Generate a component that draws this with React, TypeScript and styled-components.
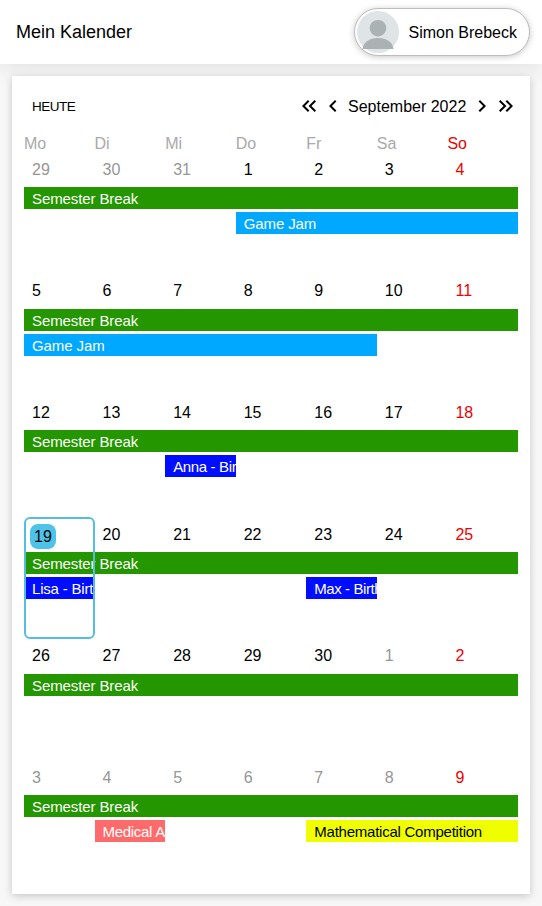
import React from "react";
import styled, { createGlobalStyle } from "styled-components";
import {
  MdChevronLeft,
  MdChevronRight,
  MdKeyboardDoubleArrowLeft,
  MdKeyboardDoubleArrowRight,
} from "react-icons/md";

const GlobalStyle = createGlobalStyle`
  *, *::before, *::after { box-sizing: border-box; }
  body {
    margin: 0;
    background: #f7f7f7;
    color: #000;
    font-family: "Liberation Sans", Arial, sans-serif;
    font-size: 16px;
  }
`;

const Page = styled.div`
  display: flex;
  flex-direction: column;
  height: 100vh;
  overflow: hidden;
`;

const Header = styled.header`
  display: flex;
  align-items: center;
  justify-content: space-between;
  flex: none;
  height: 64px;
  padding: 0 12px 0 16px;
  background: #fff;
  box-shadow: 0 0 24px rgba(0, 0, 0, 0.12);
`;

const Title = styled.h1`
  margin: 0;
  font-size: 18px;
  font-weight: 400;
`;

const UserChip = styled.button`
  display: flex;
  align-items: center;
  gap: 9.5px;
  width: 176px;
  height: 48px;
  padding: 0 0 0 2px;
  border: 1px solid #bdbdbd;
  border-radius: 24px;
  background: #fff;
  box-shadow: 0 1px 6px rgba(0, 0, 0, 0.22);
  color: #000;
  font: inherit;
  white-space: nowrap;
`;

const UserName = styled.span`
  padding-top: 2px;
  line-height: 18px;
`;

const Avatar = styled.svg`
  flex: none;
  width: 42px;
  height: 42px;
`;

const Card = styled.main`
  display: flex;
  flex-direction: column;
  flex: 1;
  margin: 12px;
  padding: 12px;
  background: #fff;
  box-shadow: 0 2px 8px rgba(0, 0, 0, 0.2);
`;

const Toolbar = styled.div`
  display: flex;
  align-items: center;
  justify-content: space-between;
  height: 36px;
  padding-left: 8px;
`;

const TodayButton = styled.button`
  padding: 0;
  border: 0;
  background: none;
  color: #000;
  font: inherit;
  font-size: 13.5px;
  letter-spacing: -0.5px;
`;

const MonthNav = styled.nav`
  display: flex;
  align-items: center;
`;

const NavButton = styled.button`
  display: flex;
  padding: 0;
  border: 0;
  background: none;
  color: #000;
  font-size: 24px;
`;

const MonthLabel = styled.span`
  margin: 0 3.7px 0 3px;
  padding-top: 2px;
  line-height: 18px;
`;

const Weekdays = styled.div`
  display: grid;
  grid-template-columns: repeat(7, 1fr);
  height: 28px;
  padding-top: 11px;
  line-height: 18px;
`;

const Weekday = styled.span<{ $sunday: boolean }>`
  color: ${(p) => (p.$sunday ? "#f00000" : "#a9a9a9")};
`;

const Weeks = styled.div`
  display: grid;
  grid-template-rows: repeat(6, 1fr);
  flex: 1;
`;

const WeekRow = styled.section`
  position: relative;
  display: grid;
  grid-template-columns: repeat(7, minmax(0, 1fr));
  grid-template-rows: 32px 22px 22px;
  align-content: start;
`;

const DayNumber = styled.span<{ $tone: string }>`
  grid-row: 1;
  padding: 8.6px 0 0 8px;
  color: ${(p) => p.$tone};
  line-height: 18px;
`;

const TodayBadge = styled.span`
  display: block;
  width: 26px;
  height: 25px;
  margin: -1.6px 0 0 -2px;
  border-radius: 8px;
  background: #4dc3ea;
  line-height: 25px;
  text-align: center;
`;

const EventBar = styled.div<{
  $start: number;
  $span: number;
  $line: number;
  $fill: string;
  $ink: string;
  $tracking: number;
}>`
  grid-row: ${(p) => p.$line + 1};
  grid-column: ${(p) => p.$start} / span ${(p) => p.$span};
  height: 22px;
  margin-top: ${(p) => p.$line * 3}px;
  padding-left: 8px;
  overflow: hidden;
  background: ${(p) => p.$fill};
  color: ${(p) => p.$ink};
  font-size: 15px;
  letter-spacing: ${(p) => p.$tracking}px;
  line-height: 23px;
  white-space: nowrap;
`;

const TodayFrame = styled.div`
  position: absolute;
  inset: 0 auto 0 0;
  width: calc(100% / 7);
  border: 2px solid #55bddf;
  border-radius: 6px;
`;

type CalendarEvent = {
  title: string;
  start: number;
  span: number;
  line: number;
  fill: string;
  ink?: string;
  tracking?: number;
};

const semesterBreak: CalendarEvent = {
  title: "Semester Break",
  start: 1,
  span: 7,
  line: 1,
  fill: "#249600",
};

const weeks: { days: number[]; events: CalendarEvent[] }[] = [
  {
    days: [29, 30, 31, 1, 2, 3, 4],
    events: [{ title: "Game Jam", start: 4, span: 4, line: 2, fill: "#00a8ff" }],
  },
  {
    days: [5, 6, 7, 8, 9, 10, 11],
    events: [{ title: "Game Jam", start: 1, span: 5, line: 2, fill: "#00a8ff" }],
  },
  {
    days: [12, 13, 14, 15, 16, 17, 18],
    events: [
      { title: "Anna - Birthday", start: 3, span: 1, line: 2, fill: "#000dff", tracking: -0.35 },
    ],
  },
  {
    days: [19, 20, 21, 22, 23, 24, 25],
    events: [
      { title: "Lisa - Birthday", start: 1, span: 1, line: 2, fill: "#000dff", tracking: -0.2 },
      { title: "Max - Birthday", start: 5, span: 1, line: 2, fill: "#000dff", tracking: -0.42 },
    ],
  },
  { days: [26, 27, 28, 29, 30, 1, 2], events: [] },
  {
    days: [3, 4, 5, 6, 7, 8, 9],
    events: [
      {
        title: "Medical Appointment",
        start: 2,
        span: 1,
        line: 2,
        fill: "#ff6b6b",
        tracking: -0.3,
      },
      {
        title: "Mathematical Competition",
        start: 5,
        span: 3,
        line: 2,
        fill: "#f0ff00",
        ink: "#000",
        tracking: -0.24,
      },
    ],
  },
];

function dayTone(week: number, index: number, day: number) {
  if (index === 6) return "#f00000";
  const outside = (week === 0 && day > 20) || (week > 3 && day < 20);
  return outside ? "#969696" : "#000";
}

export default function App() {
  return (
    <Page>
      <GlobalStyle />
      <Header>
        <Title>Mein Kalender</Title>
        <UserChip>
          <Avatar viewBox="0 0 42 42">
            <circle cx="21" cy="21" r="21" fill="#dfe4e7" />
            <circle cx="21" cy="17.2" r="8.3" fill="#aab2b4" />
            <path d="M5.5 38C6.5 31 12 27 21 27s14.500 4 15.500 11z" fill="#aab2b4" />
          </Avatar>
          <UserName>Simon Brebeck</UserName>
        </UserChip>
      </Header>
      <Card>
        <Toolbar>
          <TodayButton>HEUTE</TodayButton>
          <MonthNav>
            <NavButton aria-label="Voriges Jahr"><MdKeyboardDoubleArrowLeft /></NavButton>
            <NavButton aria-label="Voriger Monat"><MdChevronLeft /></NavButton>
            <MonthLabel>September 2022</MonthLabel>
            <NavButton aria-label="Nächster Monat"><MdChevronRight /></NavButton>
            <NavButton aria-label="Nächstes Jahr"><MdKeyboardDoubleArrowRight /></NavButton>
          </MonthNav>
        </Toolbar>
        <Weekdays>
          {["Mo", "Di", "Mi", "Do", "Fr", "Sa", "So"].map((name) => (
            <Weekday key={name} $sunday={name === "So"}>{name}</Weekday>
          ))}
        </Weekdays>
        <Weeks>
          {weeks.map((week, w) => (
            <WeekRow key={w}>
              {week.days.map((day, i) => (
                <DayNumber key={day} $tone={dayTone(w, i, day)}>
                  {day === 19 ? <TodayBadge>{day}</TodayBadge> : day}
                </DayNumber>
              ))}
              {[semesterBreak, ...week.events].map((event) => (
                <EventBar
                  key={event.title}
                  $start={event.start}
                  $span={event.span}
                  $line={event.line}
                  $fill={event.fill}
                  $ink={event.ink ?? "#fff"}
                  $tracking={event.tracking ?? -0.1}
                >
                  {event.title}
                </EventBar>
              ))}
              {week.days[0] === 19 && <TodayFrame />}
            </WeekRow>
          ))}
        </Weeks>
      </Card>
    </Page>
  );
}
